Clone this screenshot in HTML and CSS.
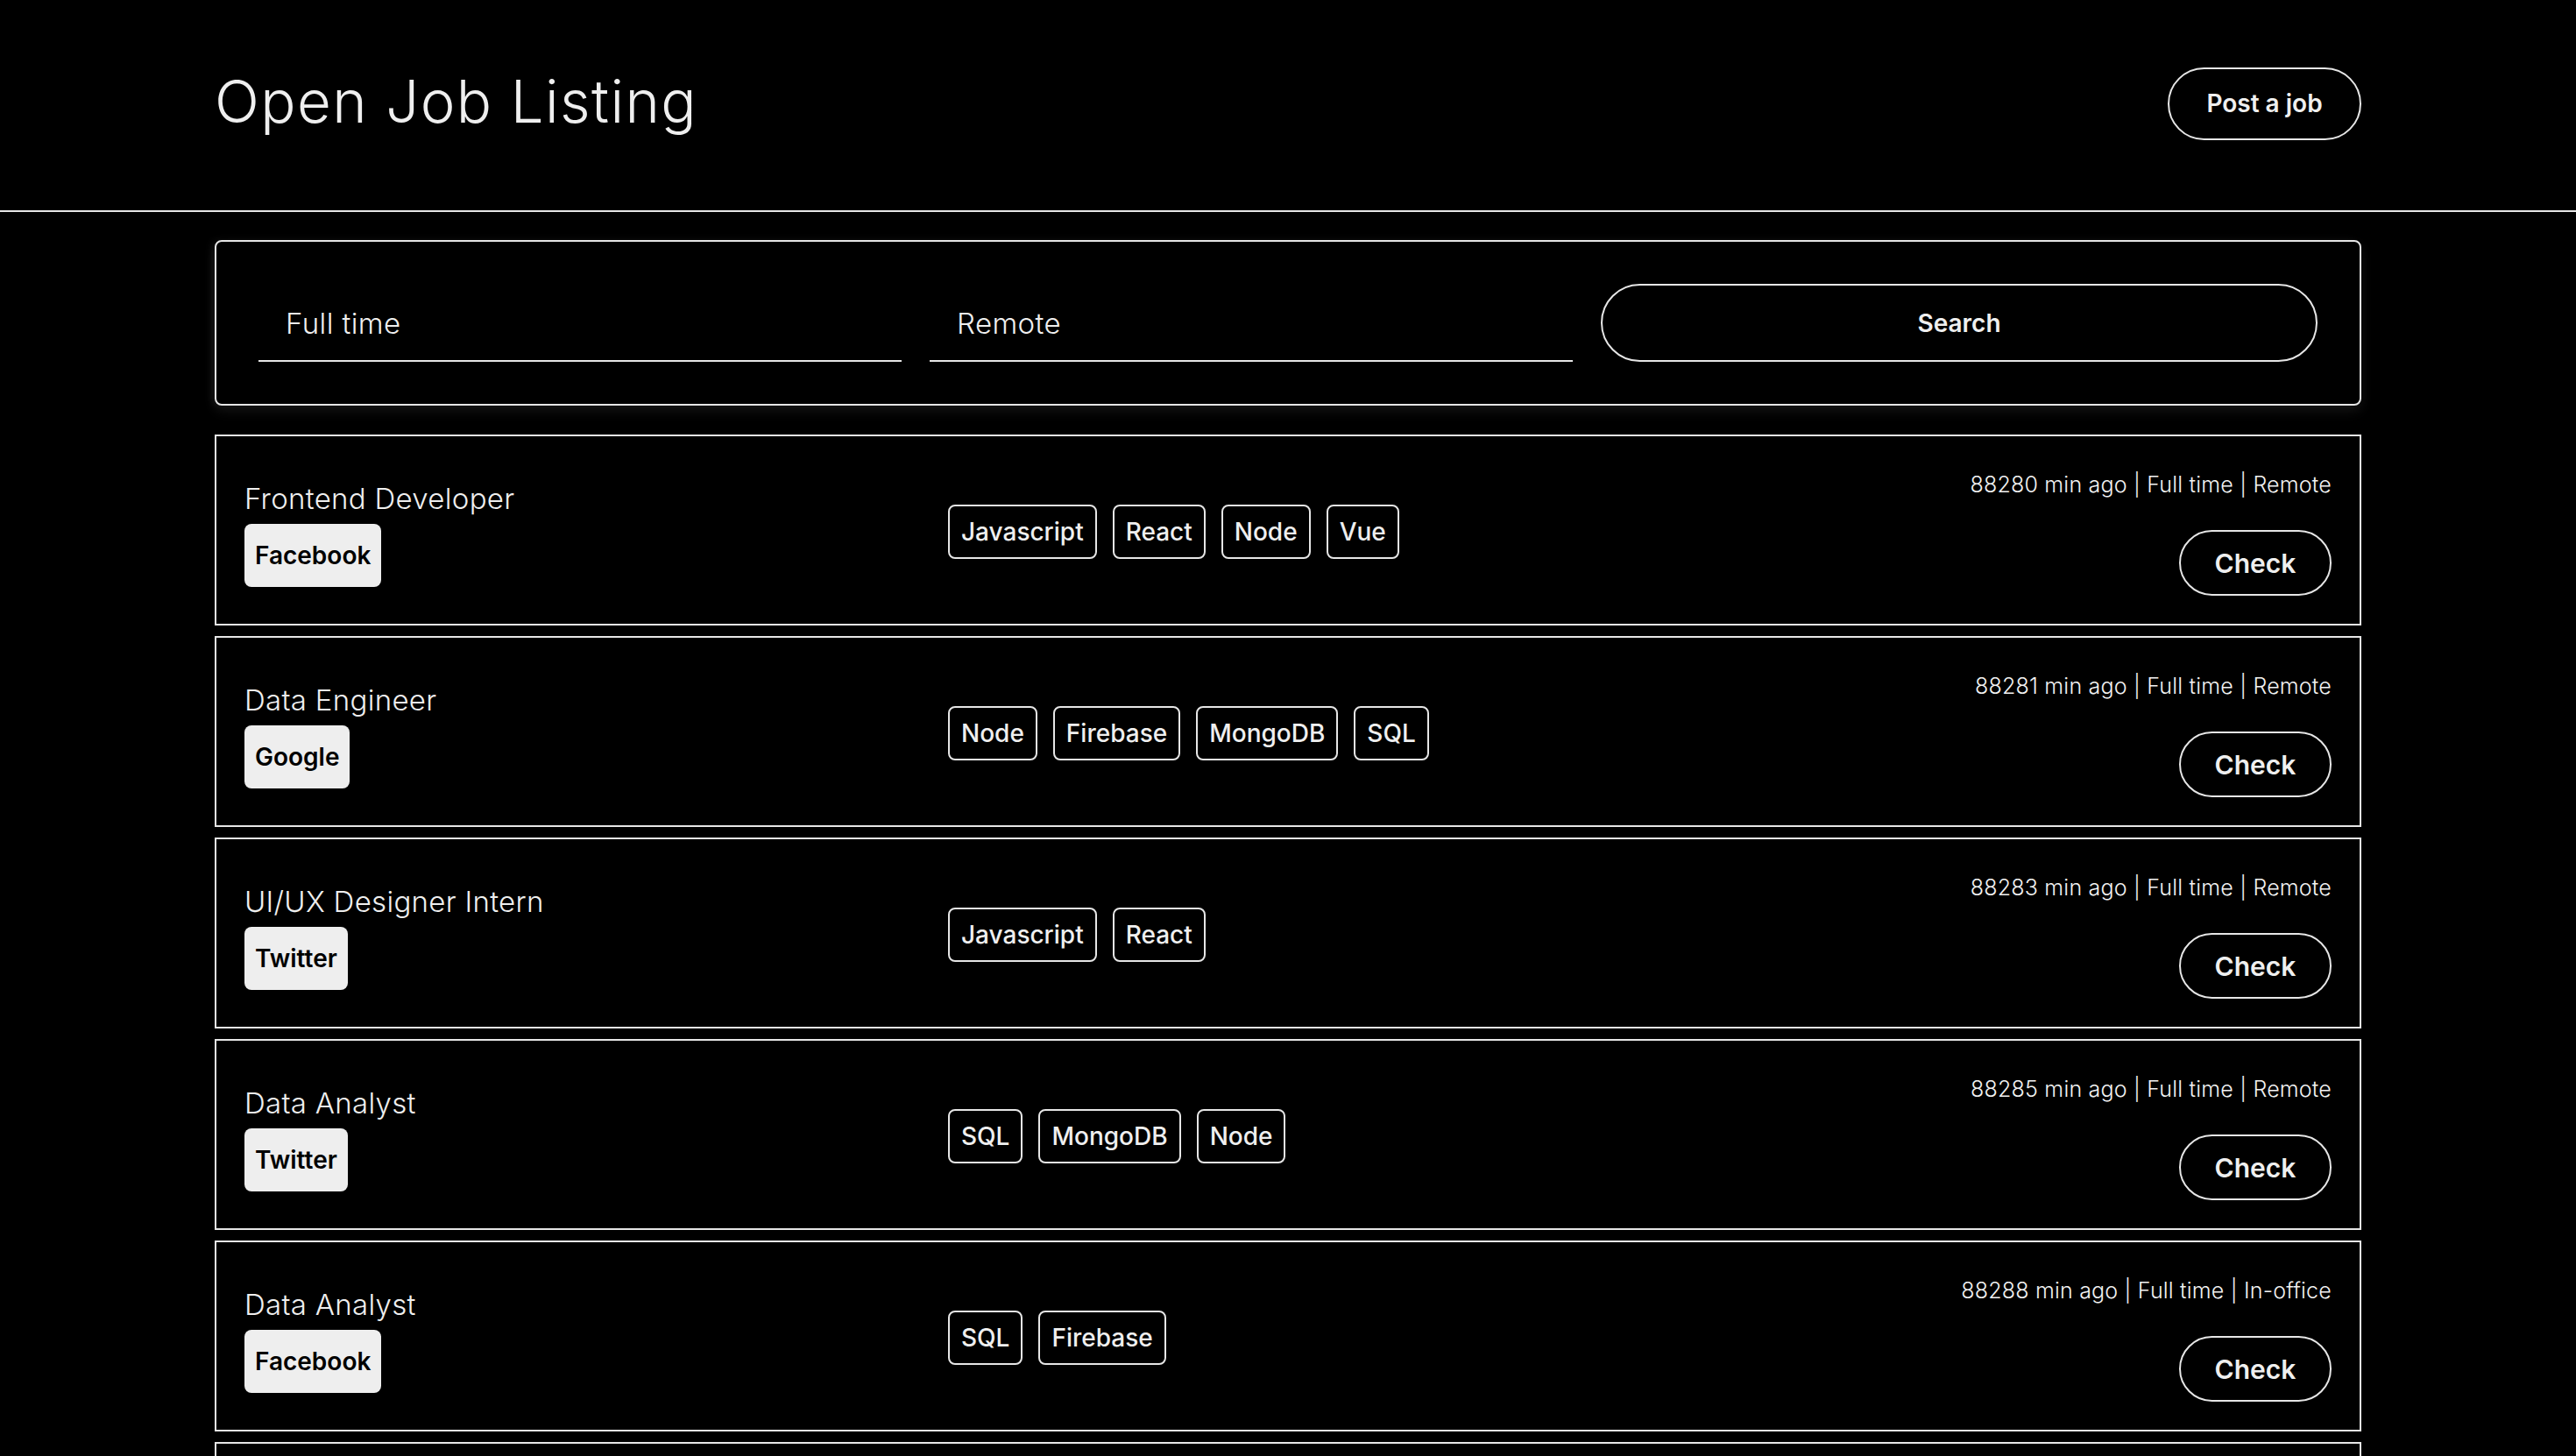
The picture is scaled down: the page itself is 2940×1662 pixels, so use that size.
FILE: index.html
```html
<!DOCTYPE html>
<html lang="en">
<head>
<meta charset="utf-8">
<title>Open Job Listing</title>
<link rel="stylesheet" href="styles.css">
</head>
<body>
<header class="header">
  <div class="header-inner">
    <h1 class="title">Open Job Listing</h1>
    <button class="post-btn">Post a job</button>
  </div>
</header>
<main class="main">
  <form class="search">
    <input class="search-input" type="text" value="Full time">
    <input class="search-input" type="text" value="Remote">
    <button class="search-btn" type="button">Search</button>
  </form>
  <div class="jobs">
    <article class="card">
      <div class="card-left">
        <div class="job-title">Frontend Developer</div>
        <span class="company">Facebook</span>
      </div>
      <div class="tags">
        <span class="tag">Javascript</span><span class="tag">React</span><span class="tag">Node</span><span class="tag">Vue</span>
      </div>
      <div class="card-right">
        <div class="meta">88280 min ago | Full time | Remote</div>
        <button class="check-btn">Check</button>
      </div>
    </article>
    <article class="card">
      <div class="card-left">
        <div class="job-title">Data Engineer</div>
        <span class="company">Google</span>
      </div>
      <div class="tags">
        <span class="tag">Node</span><span class="tag">Firebase</span><span class="tag">MongoDB</span><span class="tag">SQL</span>
      </div>
      <div class="card-right">
        <div class="meta">88281 min ago | Full time | Remote</div>
        <button class="check-btn">Check</button>
      </div>
    </article>
    <article class="card">
      <div class="card-left">
        <div class="job-title">UI/UX Designer Intern</div>
        <span class="company">Twitter</span>
      </div>
      <div class="tags">
        <span class="tag">Javascript</span><span class="tag">React</span>
      </div>
      <div class="card-right">
        <div class="meta">88283 min ago | Full time | Remote</div>
        <button class="check-btn">Check</button>
      </div>
    </article>
    <article class="card">
      <div class="card-left">
        <div class="job-title">Data Analyst</div>
        <span class="company">Twitter</span>
      </div>
      <div class="tags">
        <span class="tag">SQL</span><span class="tag">MongoDB</span><span class="tag">Node</span>
      </div>
      <div class="card-right">
        <div class="meta">88285 min ago | Full time | Remote</div>
        <button class="check-btn">Check</button>
      </div>
    </article>
    <article class="card">
      <div class="card-left">
        <div class="job-title">Data Analyst</div>
        <span class="company">Facebook</span>
      </div>
      <div class="tags">
        <span class="tag">SQL</span><span class="tag">Firebase</span>
      </div>
      <div class="card-right">
        <div class="meta">88288 min ago | Full time | In-office</div>
        <button class="check-btn">Check</button>
      </div>
    </article>
    <article class="card">
      <div class="card-left">
        <div class="job-title">Backend Developer</div>
        <span class="company">Google</span>
      </div>
      <div class="tags">
        <span class="tag">Node</span><span class="tag">SQL</span>
      </div>
      <div class="card-right">
        <div class="meta">88290 min ago | Full time | Remote</div>
        <button class="check-btn">Check</button>
      </div>
    </article>
  </div>
</main>
</body>
</html>
```

FILE: styles.css
```css
* {
  box-sizing: border-box;
}

html, body {
  margin: 0;
  padding: 0;
  background: #000;
}

body {
  color: #efefef;
  font-family: "Inter", "Open Sans", "Liberation Sans", sans-serif;
}

button, input {
  font-family: inherit;
}

.header {
  border-bottom: 2px solid #e6e6e6;
}

.header-inner {
  width: 2450px;
  margin: 0 auto;
  height: 240px;
  padding-bottom: 4px;
  display: flex;
  align-items: center;
  justify-content: space-between;
}

.title {
  margin: 0 0 4px 0;
  font-size: 67px;
  font-weight: 300;
  line-height: 1.2;
  color: #efefef;
  letter-spacing: 1.4px;
}

.post-btn {
  width: 221px;
  height: 83px;
  background: transparent;
  color: #efefef;
  border: 2px solid #e6e6e6;
  border-radius: 999px;
  font-size: 28px;
  font-weight: 600;
  padding: 0;
}

.main {
  width: 2450px;
  margin: 0 auto;
}

.search {
  margin-top: 32px;
  border: 2px solid #e6e6e6;
  border-radius: 8px;
  padding: 48px;
  display: grid;
  grid-template-columns: 734px 734px 1fr;
  gap: 32px;
  box-shadow: 0 6px 14px rgba(255, 255, 255, 0.08), -4px 0 10px rgba(255, 255, 255, 0.05);
}

.search-input {
  height: 89px;
  background: transparent;
  border: none;
  border-bottom: 2px solid #e6e6e6;
  color: #efefef;
  font-size: 33px;
  font-weight: 300;
  letter-spacing: 0.4px;
  padding: 2px 0 0 31px;
  outline: none;
}

.search-btn {
  height: 89px;
  background: transparent;
  color: #efefef;
  border: 2px solid #e6e6e6;
  border-radius: 999px;
  font-size: 28px;
  font-weight: 600;
}

.jobs {
  margin-top: 33px;
}

.card {
  border: 2px solid #e6e6e6;
  padding: 32px;
  margin-bottom: 12px;
  display: grid;
  grid-template-columns: 803px 1fr auto;
  align-items: center;
}

.card-left {
  display: flex;
  flex-direction: column;
  align-items: flex-start;
  padding-top: 4px;
}

.job-title {
  font-size: 33px;
  font-weight: 300;
  line-height: 50px;
  letter-spacing: 0.3px;
}

.company {
  margin-top: 4px;
  height: 72px;
  padding: 0 12px;
  display: inline-flex;
  align-items: center;
  background: #eeeeee;
  color: #000;
  border-radius: 8px;
  font-size: 28px;
  font-weight: 600;
}

.tags {
  display: flex;
  gap: 18px;
  align-items: center;
  padding-top: 3px;
}

.tag {
  height: 62px;
  padding: 0 13px;
  display: inline-flex;
  align-items: center;
  border: 2px solid #e6e6e6;
  border-radius: 8px;
  font-size: 28px;
  font-weight: 500;
}

.card-right {
  display: flex;
  flex-direction: column;
  align-items: flex-end;
  justify-content: space-between;
  height: 150px;
}

.meta {
  font-size: 25px;
  font-weight: 300;
  line-height: 39px;
  padding-top: 4px;
  color: #f2f2f2;
  letter-spacing: 0.2px;
}

.check-btn {
  width: 174px;
  height: 75px;
  background: transparent;
  color: #efefef;
  border: 2px solid #e6e6e6;
  border-radius: 999px;
  font-size: 30px;
  font-weight: 600;
  padding: 0;
}
```
